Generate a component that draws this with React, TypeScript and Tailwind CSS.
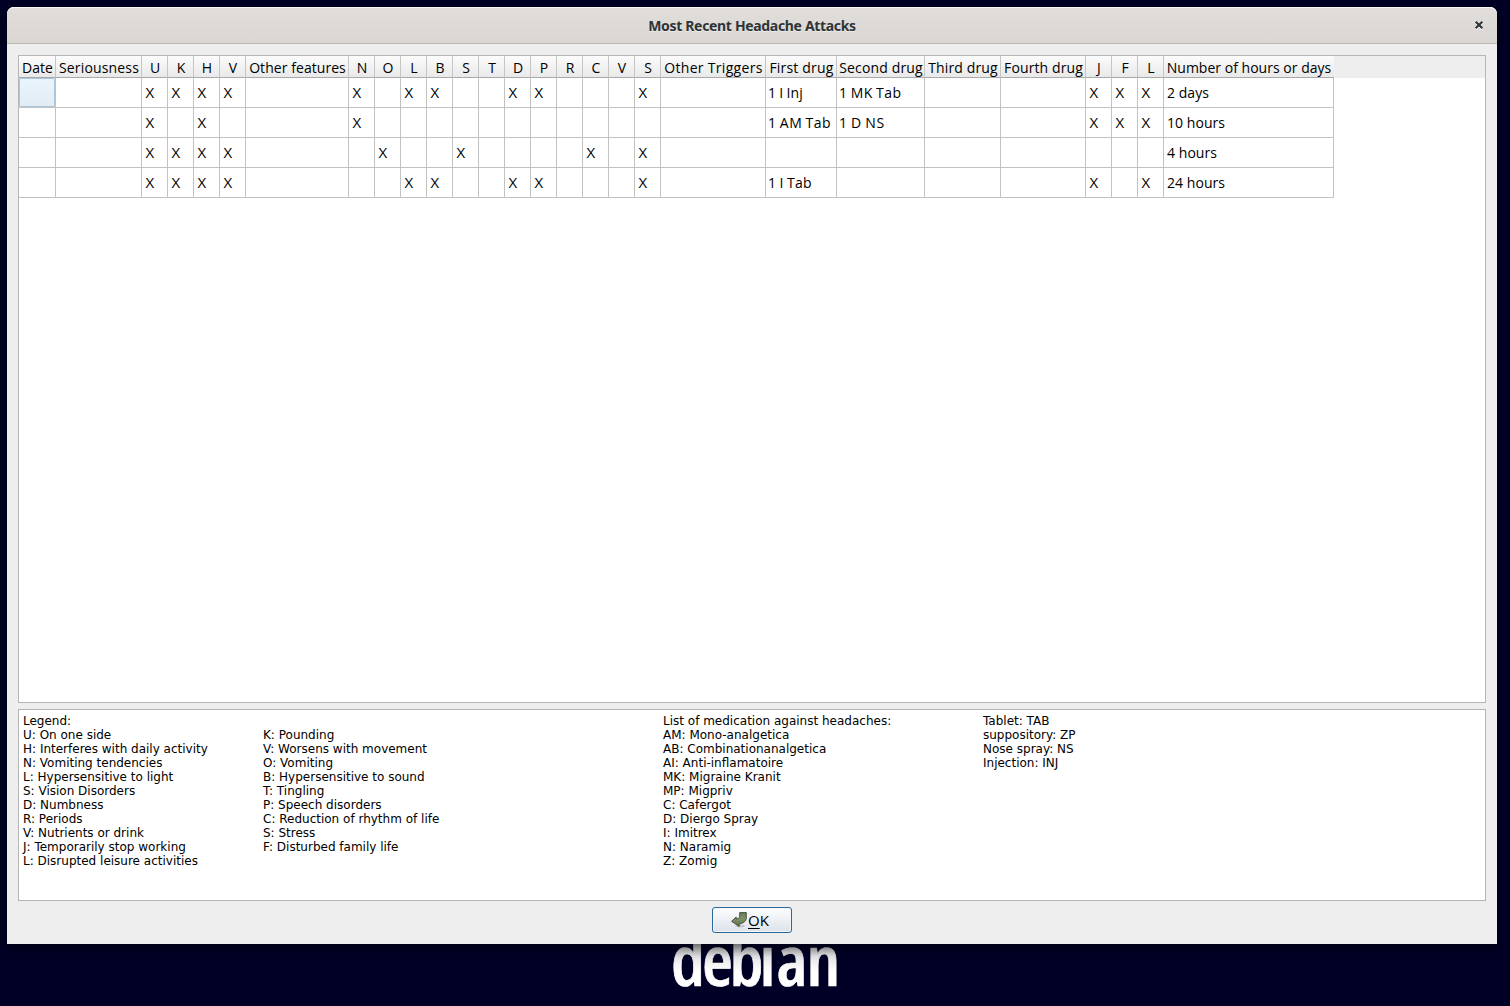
const columns: { label: string; cls: string }[] = [
  { label: "Date", cls: "w-[37px]" },
  { label: "Seriousness", cls: "w-[86px] tracking-[0.16px]" },
  ...["U", "K", "H", "V"].map((label) => ({ label, cls: "w-[26px]" })),
  { label: "Other features", cls: "w-[103px] tracking-[0.06px]" },
  ...["N", "O", "L", "B", "S", "T", "D", "P", "R", "C", "V", "S"].map((label) => ({ label, cls: "w-[26px]" })),
  { label: "Other Triggers", cls: "w-[105px] tracking-[0.3px]" },
  { label: "First drug", cls: "w-[71px] tracking-[0.18px]" },
  { label: "Second drug", cls: "w-[88px] tracking-[0.15px]" },
  { label: "Third drug", cls: "w-[76px] tracking-[0.14px]" },
  { label: "Fourth drug", cls: "w-[85px] tracking-[0.11px]" },
  ...["J", "F", "L"].map((label) => ({ label, cls: "w-[26px]" })),
  { label: "Number of hours or days", cls: "w-[170px] tracking-[0.02px]" },
];

const rows: Record<number, string>[] = [
  { 2: "X", 3: "X", 4: "X", 5: "X", 7: "X", 9: "X", 10: "X", 13: "X", 14: "X", 18: "X", 20: "1 I Inj", 21: "1 MK Tab", 24: "X", 25: "X", 26: "X", 27: "2 days" },
  { 2: "X", 4: "X", 7: "X", 20: "1 AM Tab", 21: "1 D NS", 24: "X", 25: "X", 26: "X", 27: "10 hours" },
  { 2: "X", 3: "X", 4: "X", 5: "X", 8: "X", 11: "X", 16: "X", 18: "X", 27: "4 hours" },
  { 2: "X", 3: "X", 4: "X", 5: "X", 9: "X", 10: "X", 13: "X", 14: "X", 18: "X", 20: "1 I Tab", 24: "X", 26: "X", 27: "24 hours" },
];

const cellText: Record<string, string> = {
  X: "pl-[3.4px] text-[15px] leading-[28px]",
  "1 I Inj": "pl-[2px] leading-[30px] [word-spacing:-0.5px] tracking-[0.1px]",
  "1 I Tab": "pl-[2px] leading-[30px] [word-spacing:-0.5px] tracking-[0.2px]",
  "1 AM Tab": "pl-[2px] leading-[30px] [word-spacing:-1px] tracking-[0.55px]",
  "1 MK Tab": "pl-[2px] leading-[30px] [word-spacing:-1px] tracking-[0.5px]",
  "1 D NS": "pl-[2px] leading-[30px] [word-spacing:-1px] tracking-[0.7px]",
};

const legend: { cls: string; lines: string[] }[] = [
  {
    cls: "w-[240px]",
    lines: ["Legend:", "U: On one side", "H: Interferes with daily activity", "N: Vomiting tendencies", "L: Hypersensitive to light", "S: Vision Disorders", "D: Numbness", "R: Periods", "V: Nutrients or drink", "J: Temporarily stop working", "L: Disrupted leisure activities"],
  },
  {
    cls: "w-[400px] pt-[14px]",
    lines: ["K: Pounding", "V: Worsens with movement", "O: Vomiting", "B: Hypersensitive to sound", "T: Tingling", "P: Speech disorders", "C: Reduction of rhythm of life", "S: Stress", "F: Disturbed family life"],
  },
  {
    cls: "w-[320px]",
    lines: ["List of medication against headaches:", "AM: Mono-analgetica", "AB: Combinationanalgetica", "AI: Anti-inflamatoire", "MK: Migraine Kranit", "MP: Migpriv", "C: Cafergot", "D: Diergo Spray", "I: Imitrex", "N: Naramig", "Z: Zomig"],
  },
  { cls: "", lines: ["Tablet: TAB", "suppository: ZP", "Nose spray: NS", "Injection: INJ"] },
];

function TitleBar() {
  return (
    <div className="grid h-[37px] shrink-0 grid-cols-[1fr_auto_1fr] items-center rounded-t-[7px] border-b border-[#bfb8b1] bg-linear-to-b from-[#e1dedb] to-[#dad6d2] text-[#2e3436] shadow-[inset_0_1px_0_#f8f7f6]">
      <span />
      <h1 className="pt-[2px] font-['Noto_Sans',sans-serif] text-[14px] leading-[20px] font-bold tracking-[-0.33px] [text-shadow:0_1px_0_#edebe9]">Most Recent Headache Attacks</h1>
      <button className="mr-[14px] justify-self-end" aria-label="Close">
        <svg className="block size-[8px] overflow-visible" viewBox="0 0 8 8">
          <path d="M.8 1.8 7.2 8.2M7.2 1.8.8 8.2" stroke="#fff" strokeWidth="2" />
          <path d="M.7.7 7.3 7.3M7.3.7.7 7.3" stroke="#2e3436" strokeWidth="2.1" />
        </svg>
      </button>
    </div>
  );
}

function AttackTable() {
  return (
    <div className="h-[648px] border border-[#b5b5b5] bg-white">
      <div className="flex h-[22px] bg-[#eeeeee]">
        {columns.map((c, i) => (
          <div
            key={i}
            className={`flex h-[22px] shrink-0 items-center justify-center border-b border-[#a9a9a9] bg-linear-to-b from-[#fcfcfc] to-[#e9e9e9] whitespace-nowrap ${i < 27 ? "border-r border-r-[#c6c6c6]" : ""} ${c.cls}`}
          >
            <span className={i < 27 ? "pt-[2px] pl-px" : "pt-[2px]"}>{c.label}</span>
          </div>
        ))}
      </div>
      {rows.map((row, r) => (
        <div key={r} className="flex h-[30px]">
          {columns.map((c, i) => (
            <div key={i} className={`shrink-0 border-r border-b border-[#c2c2c2] ${c.cls}`}>
              {r === 0 && i === 0 ? (
                <div className="h-full rounded-[1px] border border-[#abc6da] bg-linear-to-b from-[#e9f5fe] to-[#e2ecf4]" />
              ) : (
                <span className={`block whitespace-nowrap ${cellText[row[i]] ?? "pl-[3px] leading-[30px] tracking-[0.05px]"}`}>{row[i]}</span>
              )}
            </div>
          ))}
        </div>
      ))}
    </div>
  );
}

function Legend() {
  return (
    <div className="mt-[6px] flex h-[192px] border border-[#b5b5b5] bg-white pt-[4px] pl-[4px] font-['DejaVu_Sans',sans-serif] text-[12px] leading-[14px]">
      {legend.map((col, i) => (
        <div key={i} className={`shrink-0 ${col.cls}`}>
          {col.lines.map((line) => (
            <p key={line}>{line}</p>
          ))}
        </div>
      ))}
    </div>
  );
}

function OkButton() {
  return (
    <button className="mx-auto mt-[6px] flex h-[26px] w-[80px] items-center rounded-[3px] border border-[#28699a] bg-linear-to-b from-[#fdfdfe] to-[#dce3ea] pl-[18px] text-[15px] leading-[16px] shadow-[inset_0_0_0_1px_#f3f7fa]">
      <svg className="h-[16px] w-[17px]" viewBox="0 0 17 16">
        <defs>
          <linearGradient id="arrow" x1="0" y1="0" x2="0" y2="1">
            <stop offset="0" stopColor="#6c7c5c" />
            <stop offset=".5" stopColor="#7f916b" />
            <stop offset="1" stopColor="#5a6c49" />
          </linearGradient>
        </defs>
        <ellipse cx="9" cy="14" rx="5" ry="1.3" fill="#000" opacity=".14" />
        <path d="M8.7.6H15.3V6.6Q14.6 10.8 8.2 12V14.4L.6 9.3 5.2 5V7.1Q8.8 7 8.7 4.4Z" fill="url(#arrow)" stroke="#3d4932" strokeWidth=".9" strokeLinejoin="round" />
      </svg>
      <span className="underline decoration-1 underline-offset-[2px]">O</span>
      <span>K</span>
    </button>
  );
}

function DebianWordmark() {
  return (
    <svg className="absolute top-[910px] left-[665px] h-[96px] w-[184px]" viewBox="665 910 184 96">
      <defs>
        <linearGradient id="shade" gradientUnits="userSpaceOnUse" x1="0" y1="942" x2="0" y2="972">
          <stop offset="0" stopColor="#b4b4b6" />
          <stop offset=".5" stopColor="#e8e8ea" />
          <stop offset="1" stopColor="#ffffff" />
        </linearGradient>
      </defs>
      <text x="671 702 729.5 759.5 776.5 806.5" y="986" fill="url(#shade)" stroke="url(#shade)" strokeWidth=".7" className="font-['Open_Sans',sans-serif] text-[71px] font-semibold [font-stretch:75%]">
        debian
      </text>
    </svg>
  );
}

export default function App() {
  return (
    <main className="relative h-[1006px] w-[1510px] overflow-hidden bg-[#000026] pt-[7px] pl-[7px] font-['Open_Sans',sans-serif] text-[14px] text-black">
      <DebianWordmark />
      <section className="relative flex h-[937px] w-[1490px] flex-col rounded-t-[7px] bg-[#eeeeee] shadow-[0_3px_14px_rgba(0,0,0,0.6)]">
        <TitleBar />
        <div className="w-[1490px] px-[11px] pt-[11px]">
          <AttackTable />
          <Legend />
          <OkButton />
        </div>
      </section>
    </main>
  );
}
